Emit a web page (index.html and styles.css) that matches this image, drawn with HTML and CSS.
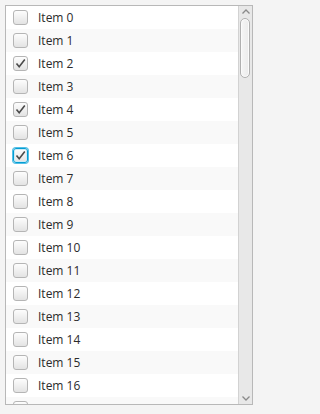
FILE: index.html
```html
<!DOCTYPE html>
<html>
<head>
<meta charset="utf-8">
<link rel="stylesheet" href="styles.css">
</head>
<body>
<div class="list-view">
  <div class="list-content">
    <div class="row"><span class="cb"></span><span class="label">Item 0</span></div>
    <div class="row odd"><span class="cb"></span><span class="label">Item 1</span></div>
    <div class="row"><span class="cb checked"><svg viewBox="0 0 15 15"><path d="M3.5 7.5 L6.2 10.8 L11.8 3.6" /></svg></span><span class="label">Item 2</span></div>
    <div class="row odd"><span class="cb"></span><span class="label">Item 3</span></div>
    <div class="row"><span class="cb checked"><svg viewBox="0 0 15 15"><path d="M3.5 7.5 L6.2 10.8 L11.8 3.6" /></svg></span><span class="label">Item 4</span></div>
    <div class="row odd"><span class="cb"></span><span class="label">Item 5</span></div>
    <div class="row"><span class="cb checked focused"><svg viewBox="0 0 15 15"><path d="M3.5 7.5 L6.2 10.8 L11.8 3.6" /></svg></span><span class="label">Item 6</span></div>
    <div class="row odd"><span class="cb"></span><span class="label">Item 7</span></div>
    <div class="row"><span class="cb"></span><span class="label">Item 8</span></div>
    <div class="row odd"><span class="cb"></span><span class="label">Item 9</span></div>
    <div class="row"><span class="cb"></span><span class="label">Item 10</span></div>
    <div class="row odd"><span class="cb"></span><span class="label">Item 11</span></div>
    <div class="row"><span class="cb"></span><span class="label">Item 12</span></div>
    <div class="row odd"><span class="cb"></span><span class="label">Item 13</span></div>
    <div class="row"><span class="cb"></span><span class="label">Item 14</span></div>
    <div class="row odd"><span class="cb"></span><span class="label">Item 15</span></div>
    <div class="row"><span class="cb"></span><span class="label">Item 16</span></div>
    <div class="row odd"><span class="cb"></span></div>
  </div>
  <div class="scrollbar">
    <div class="arrow-btn"><svg viewBox="0 0 8 5"><path d="M0.5 4.5 L4 1 L7.5 4.5" /></svg></div>
    <div class="track"><div class="thumb"></div></div>
    <div class="arrow-btn"><svg viewBox="0 0 8 5"><path d="M0.5 0.5 L4 4 L7.5 0.5" /></svg></div>
  </div>
</div>
</body>
</html>
```
FILE: styles.css
```css
html, body {
  margin: 0;
  padding: 0;
}
body {
  background: #f4f4f4;
  padding: 5px;
  font-family: "Open Sans", "Noto Sans", sans-serif;
  font-size: 12px;
  color: #2b2b2b;
}
.list-view {
  box-sizing: border-box;
  width: 248px;
  height: 400px;
  border: 1px solid #b8b8b8;
  background: #ffffff;
  display: flex;
  overflow: hidden;
}
.list-content {
  flex: 1;
  overflow: hidden;
}
.row {
  height: 23px;
  display: flex;
  align-items: center;
  padding-left: 7px;
  background: #ffffff;
}
.row.odd {
  background: #f9f9f9;
}
.cb {
  box-sizing: border-box;
  width: 15px;
  height: 15px;
  border: 1px solid #b5b5b5;
  border-radius: 3px;
  background: linear-gradient(#fdfdfd, #e3e3e3);
  display: flex;
  align-items: center;
  justify-content: center;
  flex: none;
}
.cb svg {
  width: 15px;
  height: 15px;
  margin: -1px;
}
.cb svg path {
  fill: none;
  stroke: #4a4a4a;
  stroke-width: 1.6;
}
.cb.focused {
  border-color: #039ed3;
  box-shadow: 0 0 0 1px #55bfe6, inset 0 0 0 1px #cdeaf6;
}
.label {
  margin-left: 10px;
  line-height: 16px;
}
.scrollbar {
  width: 13px;
  flex: none;
  border-left: 1px solid #d2d2d2;
  background: #e8e8e8;
  display: flex;
  flex-direction: column;
}
.arrow-btn {
  height: 11px;
  display: flex;
  align-items: center;
  justify-content: center;
  flex: none;
}
.arrow-btn svg {
  width: 8px;
  height: 5px;
}
.arrow-btn svg path {
  fill: none;
  stroke: #8a8a8a;
  stroke-width: 1.3;
}
.track {
  flex: 1;
  padding: 1px 2px 0 1px;
}
.thumb {
  box-sizing: border-box;
  height: 60px;
  border: 1px solid #b0b0b0;
  border-radius: 5px;
  background: linear-gradient(90deg, #f6f6f6, #ebebeb);
  box-shadow: inset 0 0 0 1px #fbfbfb;
}
```
